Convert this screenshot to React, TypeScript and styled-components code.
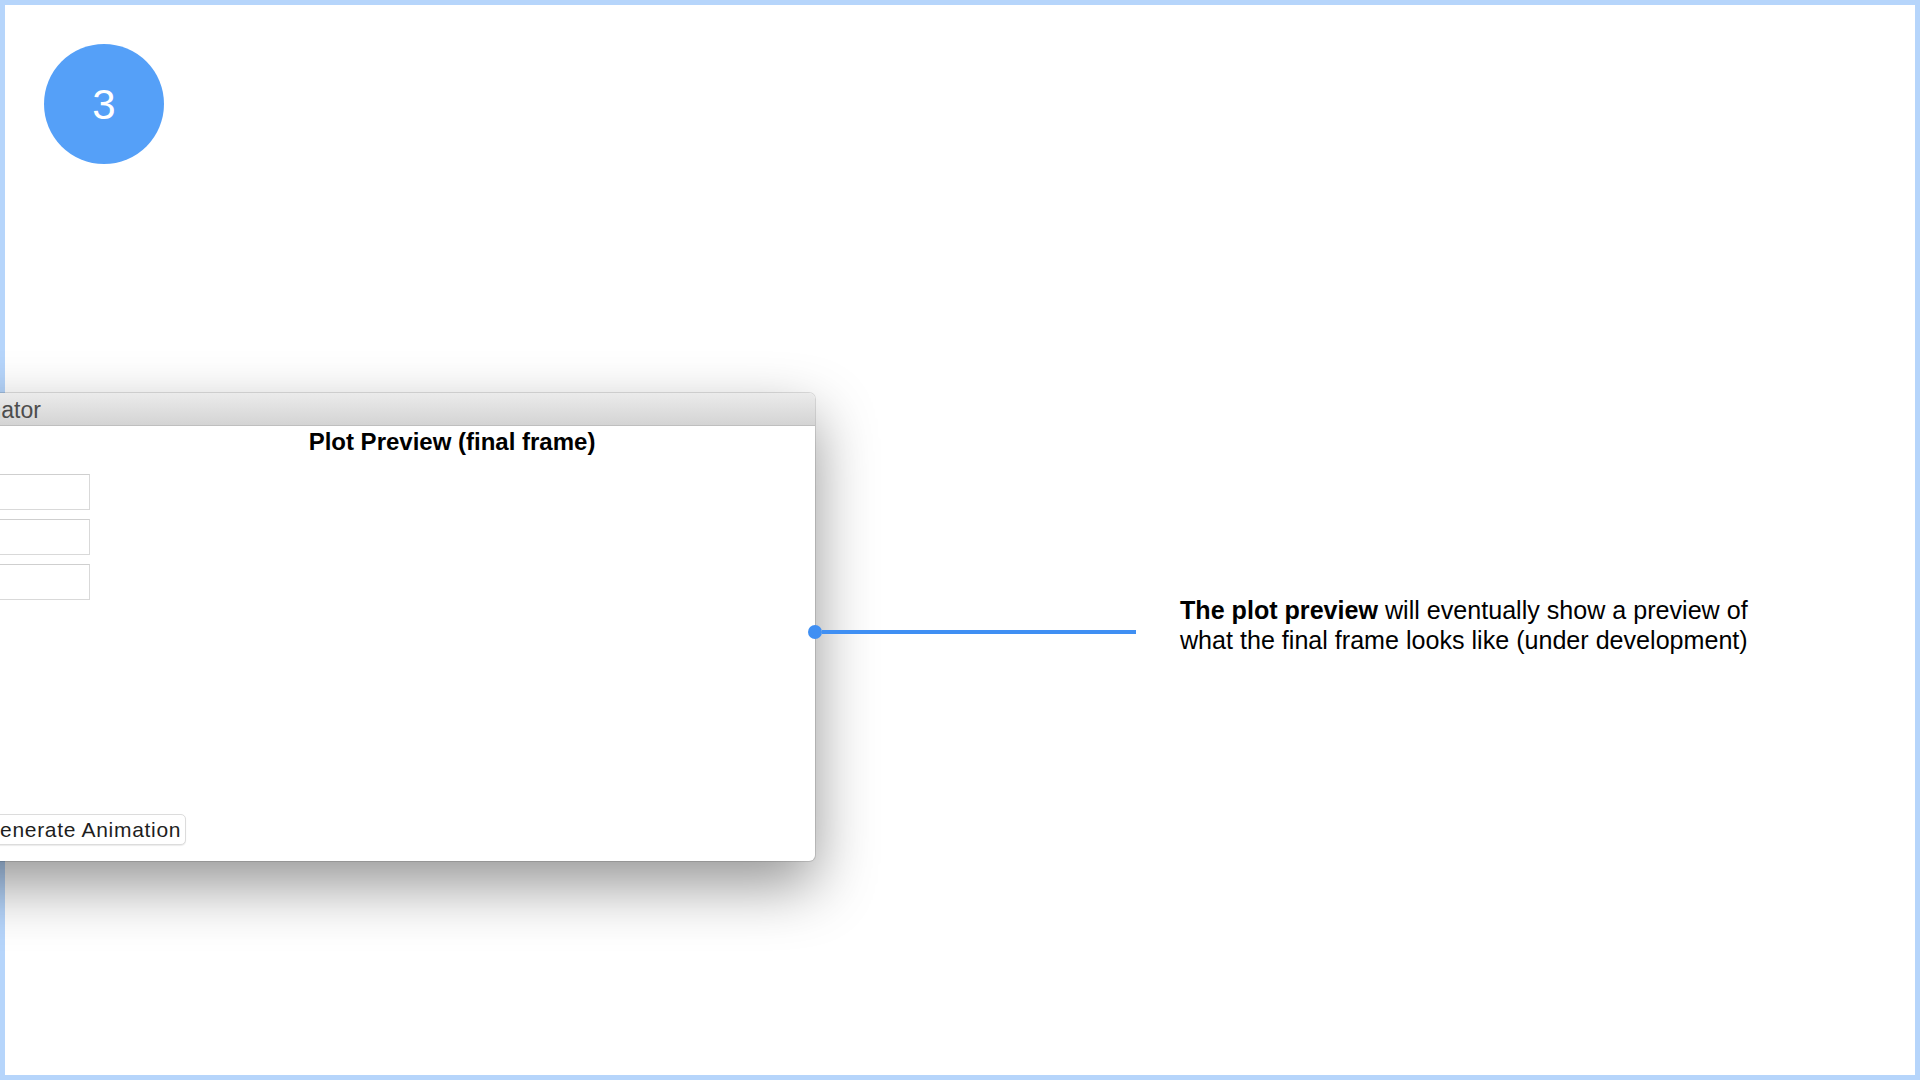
import React from 'react';
import styled, { createGlobalStyle } from 'styled-components';

const GlobalStyle = createGlobalStyle`
  html, body {
    margin: 0;
    padding: 0;
    background: #ffffff;
    overflow: hidden;
  }
  body {
    font-family: "Liberation Sans", Arial, Helvetica, sans-serif;
  }
`;

const Frame = styled.div`
  box-sizing: border-box;
  width: 1920px;
  height: 1080px;
  border: 5px solid #b6d5fb;
  padding: 39px 0 0 39px;
  display: flex;
  flex-direction: column;
`;

const StepBadge = styled.div`
  width: 120px;
  height: 120px;
  border-radius: 50%;
  background: #55a0f8;
  color: #ffffff;
  font-size: 42px;
  display: flex;
  align-items: center;
  justify-content: center;
  padding-top: 1px;
  box-sizing: border-box;
`;

const Stage = styled.div`
  display: flex;
  align-items: flex-start;
  margin-top: 229px;
`;

const Window = styled.div`
  position: relative;
  z-index: 1;
  flex: none;
  width: 1632px;
  margin-left: -861px;
  border-radius: 6px;
  background: #ffffff;
  box-shadow: 0 24px 60px rgba(0, 0, 0, 0.42), 0 0 0 1px rgba(0, 0, 0, 0.12);
  display: flex;
  flex-direction: column;
`;

const TitleBar = styled.div`
  height: 33px;
  padding: 2px 53px 0 0;
  box-sizing: border-box;
  border-radius: 6px 6px 0 0;
  background: linear-gradient(#ebebeb, #d4d4d4);
  border-bottom: 1px solid #bfbfbf;
  display: flex;
  align-items: center;
  justify-content: center;
  font-size: 23px;
  color: #4d4d4d;
`;

const WindowBody = styled.div`
  height: 435px;
  display: flex;
  flex-direction: column;
  border-radius: 0 0 6px 6px;
`;

const Panes = styled.div`
  flex: 1;
  display: grid;
  grid-template-columns: 907px 724px;
`;

const Controls = styled.div`
  display: flex;
  flex-direction: column;
  gap: 9px;
  padding: 48px 0 0 0;
`;

const Field = styled.div`
  display: flex;
  justify-content: flex-end;
  align-items: center;
  gap: 12px;
`;

const FieldLabel = styled.label`
  font-size: 20px;
  color: #222;
`;

const FieldInput = styled.div`
  box-sizing: border-box;
  width: 150px;
  height: 36px;
  border: 1px solid #d9d9d9;
  border-top-color: #cfcfcf;
  background: #ffffff;
`;

const PlotPane = styled.div`
  display: flex;
  flex-direction: column;
  align-items: center;
  padding-top: 2px;
`;

const PlotTitle = styled.h2`
  margin: 0;
  font-size: 24px;
  line-height: 28px;
  font-weight: bold;
  color: #000;
`;

const Footer = styled.div`
  display: flex;
  padding: 0 0 16px 791px;
`;

const ActionButton = styled.button`
  height: 31px;
  padding: 0 4px 0 8px;
  border: 1px solid #dcdcdc;
  border-radius: 5px;
  background: #ffffff;
  box-shadow: 0 1px 1px rgba(0, 0, 0, 0.08);
  font-family: "Liberation Sans", Arial, sans-serif;
  font-size: 21px;
  letter-spacing: 0.7px;
  color: #1e1e1e;
  white-space: nowrap;
`;

const Annotation = styled.div`
  display: flex;
  align-items: flex-start;
  margin-top: 202px;
`;

const Connector = styled.div`
  display: flex;
  align-items: center;
  margin: 30px 0 0 -7px;
  position: relative;
  z-index: 2;
`;

const Dot = styled.span`
  width: 14px;
  height: 14px;
  border-radius: 50%;
  background: #3f8ff3;
`;

const Line = styled.span`
  width: 314px;
  height: 4px;
  background: #3f8ff3;
`;

const Note = styled.p`
  margin: 0 0 0 44px;
  width: 600px;
  font-size: 25.1px;
  line-height: 30px;
  color: #000;
`;

const Lead = styled.span`
  font-weight: bold;
`;

const fields = ['Frames:', 'Interval (ms):', 'Output file:'];

export default function App() {
  return (
    <>
      <GlobalStyle />
      <Frame>
        <StepBadge>3</StepBadge>
        <Stage>
          <Window>
            <TitleBar>Plot Animator</TitleBar>
            <WindowBody>
              <Panes>
                <Controls>
                  {fields.map(f => (
                    <Field key={f}>
                      <FieldLabel>{f}</FieldLabel>
                      <FieldInput />
                    </Field>
                  ))}
                </Controls>
                <PlotPane>
                  <PlotTitle>Plot Preview (final frame)</PlotTitle>
                </PlotPane>
              </Panes>
              <Footer>
                <ActionButton>Generate Animation</ActionButton>
              </Footer>
            </WindowBody>
          </Window>
          <Annotation>
            <Connector>
              <Dot />
              <Line />
            </Connector>
            <Note>
              <Lead>The plot preview</Lead> will eventually show a preview of what the final frame looks like (under development)
            </Note>
          </Annotation>
        </Stage>
      </Frame>
    </>
  );
}
